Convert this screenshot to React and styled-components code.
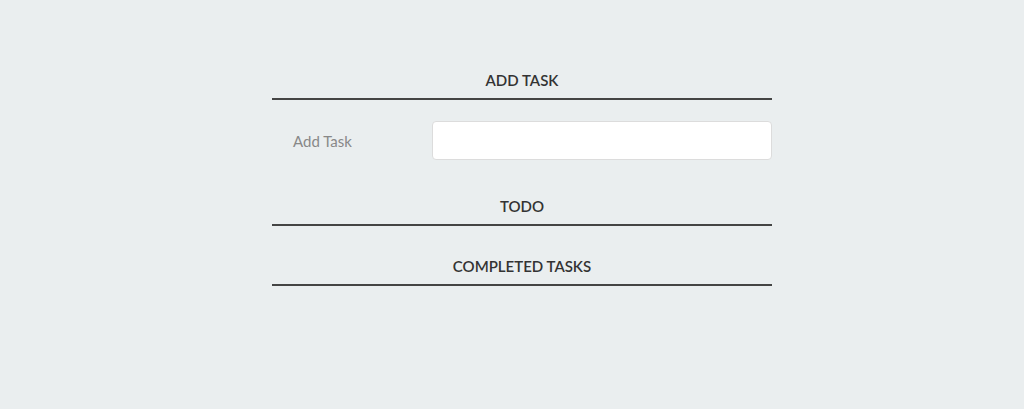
import React from 'react';
import styled, { createGlobalStyle } from 'styled-components';

const GlobalStyle = createGlobalStyle`
    html, body {
        margin: 0;
        padding: 0;
        background: #eaeeef;
        font-family: Lato, "Open Sans", sans-serif;
    }
`;

const Page = styled.div`
    min-height: 409px;
    background: #eaeeef;
    padding: 40px 0 0 20px;
    box-sizing: border-box;
`;

const Container = styled.div`
    width: 500px;
    margin: 0 auto;
    display: flex;
    flex-direction: column;
`;

const Heading = styled.h3`
    margin: 30px 0 0;
    padding-bottom: 8px;
    font-size: 15px;
    line-height: 20px;
    font-weight: 600;
    color: #333;
    text-align: center;
    border-bottom: 2px solid #444;
`;

const Row = styled.div`
    display: grid;
    grid-template-columns: 160px 1fr;
    align-items: center;
    margin: 21px 0 6px;
`;

const Label = styled.label`
    padding-left: 21px;
    font-size: 15px;
    color: #888;
`;

const Input = styled.input`
    height: 39px;
    box-sizing: border-box;
    border: 1px solid #dcdcdc;
    border-radius: 4px;
    background: #fff;
    padding: 0 10px;
    font-family: inherit;
    font-size: 15px;
    outline: none;
`;

const App = () => {
    return (
        <>
            <GlobalStyle />
            <Page>
                <Container>
                    <Heading>ADD TASK</Heading>
                    <Row>
                        <Label htmlFor="new-task">Add Task</Label>
                        <Input id="new-task" type="text" />
                    </Row>
                    <Heading>TODO</Heading>
                    <Heading>COMPLETED TASKS</Heading>
                </Container>
            </Page>
        </>
    );
};

export default App;
